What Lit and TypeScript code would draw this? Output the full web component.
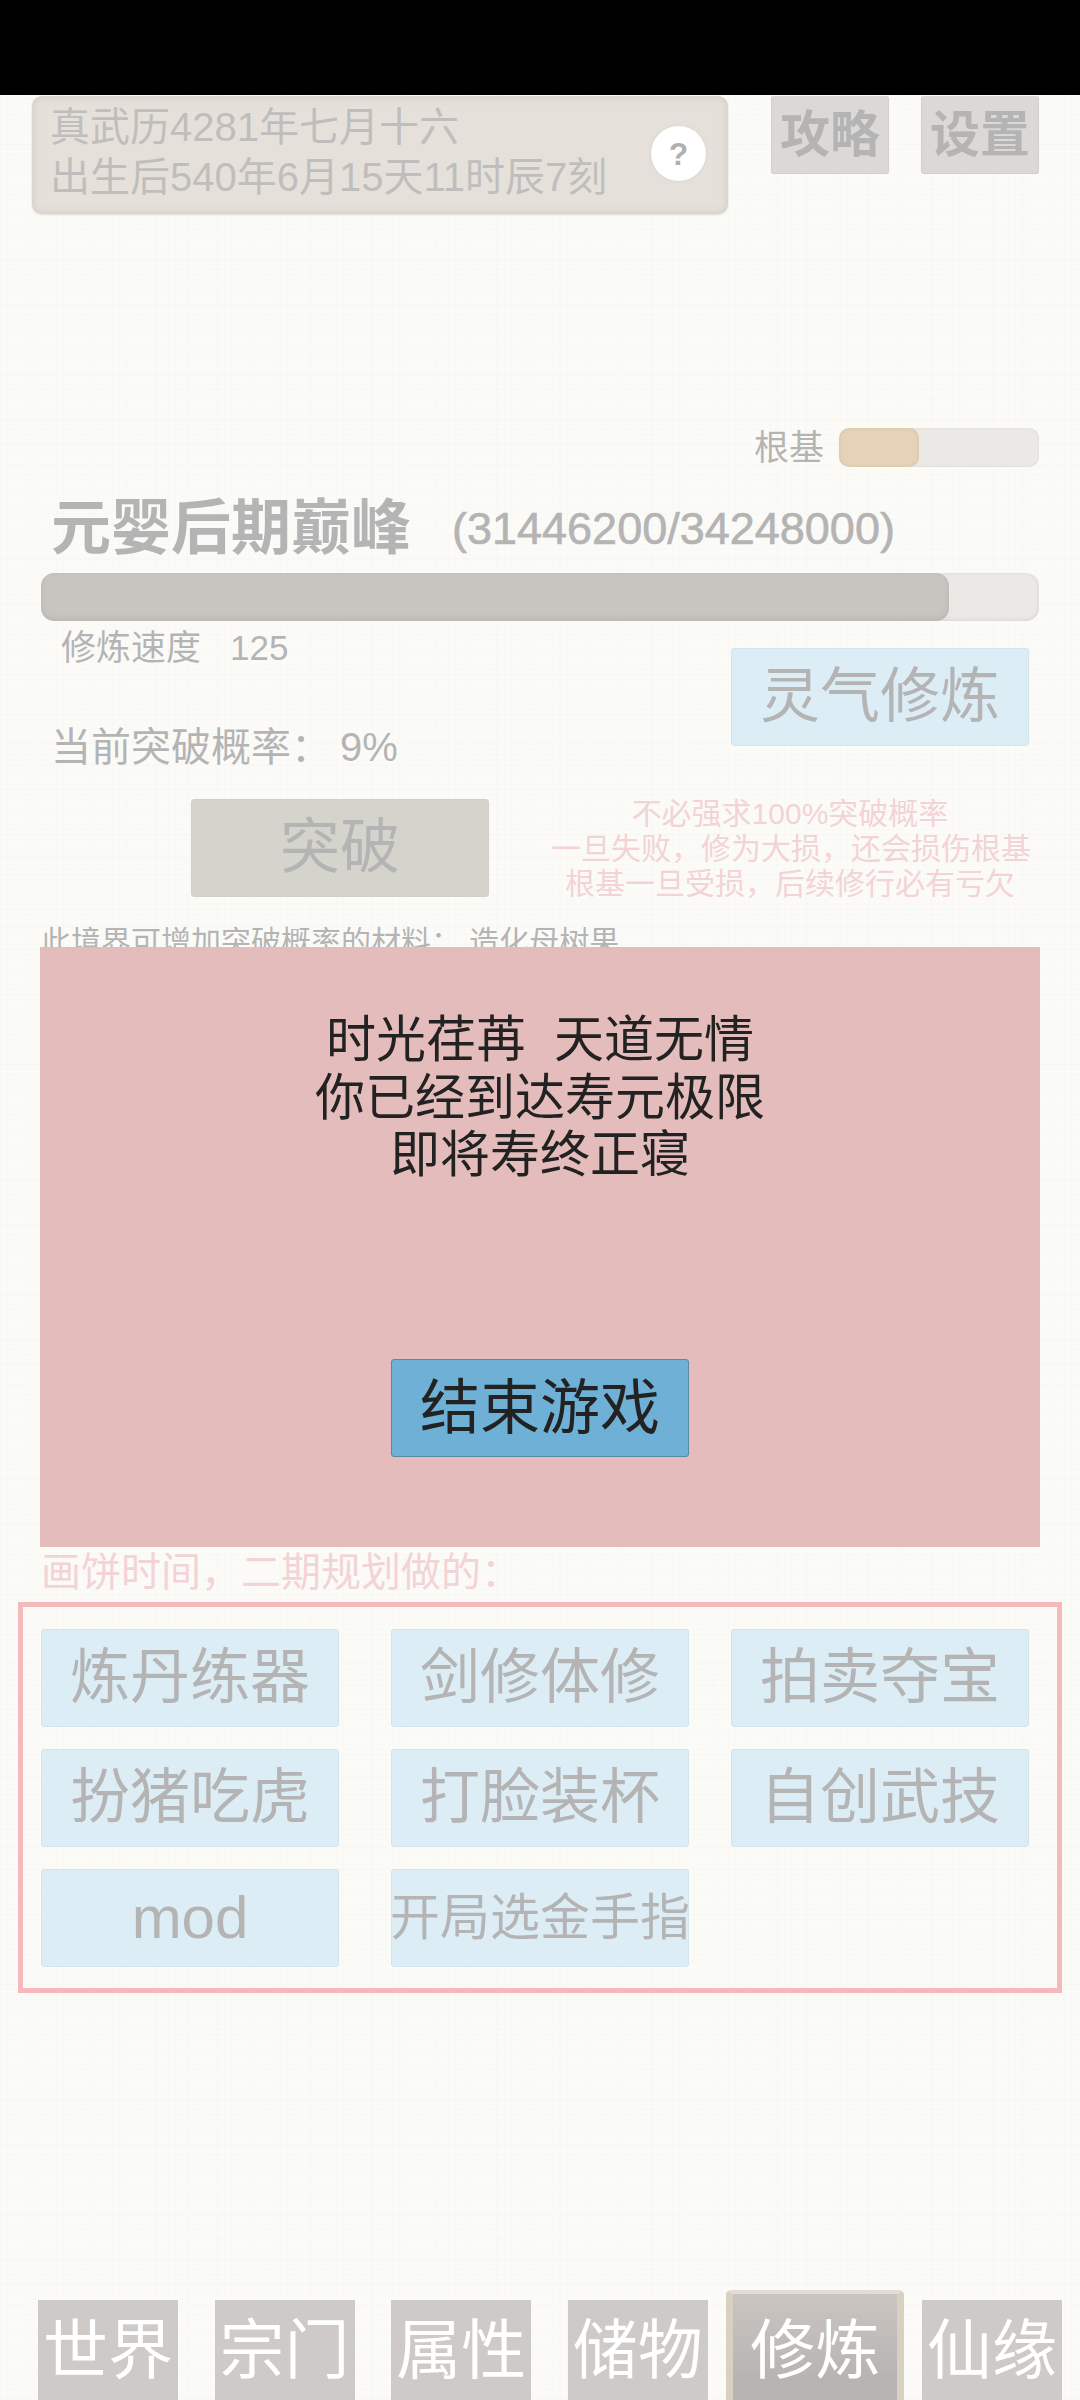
import { LitElement, html, css } from "lit";
import { customElement } from "lit/decorators.js";

const FUTURE = ["炼丹练器", "剑修体修", "拍卖夺宝", "扮猪吃虎", "打脸装杯", "自创武技", "mod", "开局选金手指"];
const TABS = ["世界", "宗门", "属性", "储物", "修炼", "仙缘"];

@customElement("app-root")
export class AppRoot extends LitElement {
  static styles = css`
    :host {
      display: block;
      width: 1080px;
      height: 2400px;
      position: relative;
      overflow: hidden;
      font-family: "Liberation Sans", "Noto Sans CJK SC", sans-serif;
      color: #444;
      background-color: #f6f4eb;
      background-image:
        repeating-linear-gradient(0deg, rgba(120, 110, 80, 0.03) 0 1px, transparent 1px 5px),
        repeating-linear-gradient(90deg, rgba(120, 110, 80, 0.025) 0 1px, transparent 1px 7px),
        repeating-linear-gradient(0deg, rgba(120, 110, 80, 0.02) 0 3px, transparent 3px 23px),
        repeating-linear-gradient(90deg, rgba(120, 110, 80, 0.018) 0 2px, transparent 2px 31px);
    }
    .status { height: 95px; background: #000; position: relative; z-index: 3; }
    .page { height: 2305px; display: flex; flex-direction: column; box-sizing: border-box; }

    .top { display: flex; align-items: flex-start; padding: 1px 0 0 32px; }
    .clock {
      width: 696px; height: 118px; box-sizing: border-box;
      display: flex; align-items: center; justify-content: space-between;
      padding: 0 22px 6px 18px;
      background: #c0b1a2; border-radius: 10px;
      box-shadow: inset 0 0 8px rgba(60, 50, 40, 0.45), 0 1px 2px rgba(60, 50, 40, 0.4);
      color: #615d58; font-size: 40px; line-height: 50px;
    }
    .help {
      width: 55px; height: 55px; border-radius: 50%; background: #fff; flex: none;
      margin-top: 3px;
      display: flex; align-items: center; justify-content: center;
      color: #3a3a3a; font-size: 32px; font-weight: bold; line-height: 1;
      box-shadow: 0 0 3px rgba(0, 0, 0, 0.25);
    }
    .mini {
      width: 118px; height: 78px; box-sizing: border-box;
      display: flex; align-items: center; justify-content: center;
      background: #a59d96; border-radius: 3px;
      border: 1px solid #8f8880; border-top: none;
      font-size: 50px; font-weight: bold; line-height: 1;
    }
    .mini.first { margin-left: 43px; }
    .mini.second { margin-left: 32px; }

    .root-row {
      margin-top: 214px; height: 39px; padding-right: 41px;
      display: flex; justify-content: flex-end; align-items: center; gap: 15px;
      font-size: 35px; line-height: 39px;
    }
    .root-track {
      width: 200px; height: 39px; border-radius: 10px; background: #cdc8be; overflow: hidden;
      box-shadow: inset 0 0 3px rgba(60, 50, 40, 0.3);
    }
    .root-fill {
      height: 100%; border-radius: 10px; background: #c0914d;
      box-shadow: inset 0 0 4px rgba(90, 60, 20, 0.5);
    }

    .realm {
      margin-top: 27px; height: 69px; padding-left: 51px;
      display: flex; align-items: center; line-height: 69px;
    }
    .realm b { font-size: 60px; }
    .realm span { font-size: 45px; margin-left: 41px; -webkit-text-stroke: 0.7px #444; }

    .bar {
      margin: 10px 41px 0; height: 48px; border-radius: 13px; background: #cdc8be; overflow: hidden;
      box-shadow: inset 0 -1px 4px rgba(60, 50, 40, 0.35);
    }
    .bar-fill {
      height: 100%; border-radius: 13px; background: #756e64;
      box-shadow: inset 0 -2px 5px rgba(30, 25, 20, 0.45);
    }

    .stats { display: flex; justify-content: space-between; padding: 0 51px 0 51px; height: 149px; }
    .speed { margin: 7px 0 0 10px; font-size: 35px; line-height: 40px; }
    .speed span { margin-left: 29px; }
    .odds { margin-top: 56px; font-size: 40px; line-height: 46px; }
    .odds span { margin-left: 9px; }
    .btn {
      width: 298px; height: 98px; box-sizing: border-box;
      display: flex; align-items: center; justify-content: center;
      background: #a7d2e8; border: 1px solid #8fbcd3; border-radius: 3px;
      font-size: 60px; line-height: 1; white-space: nowrap; flex: none;
    }
    .btn.small { font-size: 50px; }
    .stats .btn { margin-top: 27px; }

    .break { display: flex; align-items: center; margin-top: 25px; padding-left: 191px; }
    .btn.gray { background: #93917f; border-color: #8a8876; }
    .hint {
      width: 478px; margin: 1px 0 0 62px; text-align: center;
      color: #e19196; font-size: 30px; line-height: 35px; white-space: nowrap;
    }
    .mats { margin: 23px 0 0 41px; font-size: 30px; line-height: 35px; }
    .plan { margin: 590px 0 0 41px; color: #e19196; font-size: 40px; line-height: 46px; }
    .box {
      margin: 7px 0 0 18px; width: 1044px; height: 391px; box-sizing: border-box;
      border: 5px solid #e64e55; padding: 22px 0 0 18px;
      display: grid; grid-template-columns: 350px 340px 298px; grid-auto-rows: 98px; row-gap: 22px;
    }

    .tabs {
      margin-top: auto; height: 110px; padding-left: 38px;
      display: flex; align-items: flex-end; gap: 36.6px;
    }
    .tab {
      width: 140px; height: 100px; box-sizing: border-box; flex: none;
      display: flex; justify-content: center; padding-top: 13px;
      background: #827b76; color: #fff; font-size: 65px; line-height: 75px;
    }
    .tab.on {
      width: 178px; height: 110px; margin: 0 -19px 0 -18px; padding-top: 19px;
      border: solid #a08c62; border-width: 4px 7px 0; border-top-color: #b5ab95;
      border-radius: 5px 5px 0 0;
      background: linear-gradient(180deg, #7c6d64 0%, #4a463f 80%);
    }

    .scrim {
      position: absolute; left: 0; right: 0; top: 95px; bottom: 0;
      background: rgba(255, 255, 255, 0.6); z-index: 1;
    }
    .modal {
      position: absolute; left: 40px; top: 947px; width: 1000px; height: 600px; z-index: 2;
      box-sizing: border-box; padding-top: 65px;
      display: flex; flex-direction: column; align-items: center;
      background: #e3bcbb; color: #222; text-align: center;
      font-size: 50px; line-height: 57.5px;
    }
    .modal .pre { white-space: pre; }
    .modal .btn {
      margin-top: 174px; padding-top: 2px; background: #6fb1d6; border-color: #5a89a6; color: #222;
    }
  `;

  render() {
    return html`
      <div class="status"></div>
      <div class="page">
        <div class="top">
          <div class="clock">
            <div>真武历4281年七月十六<br />出生后540年6月15天11时辰7刻</div>
            <div class="help">?</div>
          </div>
          <div class="mini first">攻略</div>
          <div class="mini second">设置</div>
        </div>
        <div class="root-row">
          <span>根基</span>
          <div class="root-track"><div class="root-fill" style="width: 40%"></div></div>
        </div>
        <div class="realm"><b>元婴后期巅峰</b><span>(31446200/34248000)</span></div>
        <div class="bar"><div class="bar-fill" style="width: 91%"></div></div>
        <div class="stats">
          <div>
            <div class="speed">修炼速度<span>125</span></div>
            <div class="odds">当前突破概率：<span>9%</span></div>
          </div>
          <div class="btn">灵气修炼</div>
        </div>
        <div class="break">
          <div class="btn gray">突破</div>
          <div class="hint">不必强求100%突破概率<br />一旦失败，修为大损，还会损伤根基<br />根基一旦受损，后续修行必有亏欠</div>
        </div>
        <div class="mats">此境界可增加突破概率的材料： 造化母树果</div>
        <div class="plan">画饼时间，二期规划做的：</div>
        <div class="box">
          ${FUTURE.map((t) => html`<div class="btn ${t.length > 4 ? "small" : ""}">${t}</div>`)}
        </div>
        <div class="tabs">
          ${TABS.map((t) => html`<div class="tab ${t === "修炼" ? "on" : ""}">${t}</div>`)}
        </div>
      </div>
      <div class="scrim"></div>
      <div class="modal">
        <div class="pre">时光荏苒  天道无情</div>
        <div>你已经到达寿元极限</div>
        <div>即将寿终正寝</div>
        <div class="btn">结束游戏</div>
      </div>
    `;
  }
}
